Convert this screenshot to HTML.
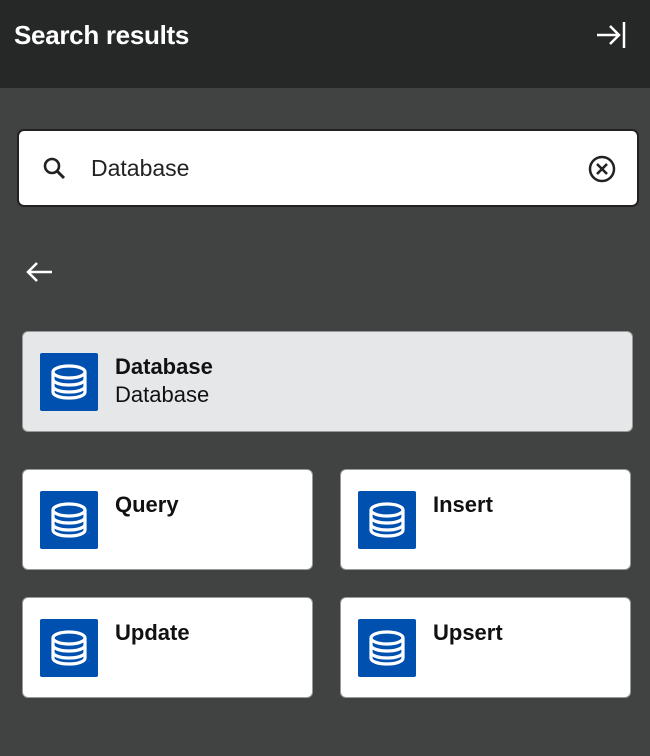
<!DOCTYPE html>
<html><head><style>
*{margin:0;padding:0;box-sizing:border-box}
body{width:650px;height:756px;background:#414242;font-family:"Liberation Sans",sans-serif;position:relative;overflow:hidden}
.hdr{position:absolute;left:0;top:0;width:650px;height:88px;background:#262727}
.hdr h1{position:absolute;left:14px;top:20px;font-size:26px;font-weight:bold;color:#fff;letter-spacing:-0.3px}
.search{position:absolute;left:17px;top:129px;width:622px;height:78px;background:#fff;border:2px solid #222;border-radius:7px}
.search span{position:absolute;left:72px;top:24px;font-size:23px;color:#222}
.card{position:absolute;background:#fff;border-radius:6px;border:1px solid #999}
.icon{position:absolute;left:17px;top:21px;width:58px;height:58px;background:#0050b0;border-radius:2px}
.t{position:absolute;left:92px;top:22px;font-size:22px;font-weight:bold;color:#111}
.s{position:absolute;left:92px;top:50px;font-size:22px;color:#111}
</style></head><body>
<div class="hdr"><h1>Search results</h1>
<svg style="position:absolute;left:595px;top:20px" width="32" height="30" viewBox="0 0 32 30"><path d="M2 15H24M15 6l9 9-9 9" stroke="#fff" stroke-width="2.5" fill="none"/><path d="M29 2V28" stroke="#fff" stroke-width="2.5"/></svg>
</div>
<div class="search">
<svg style="position:absolute;left:22px;top:24px" width="28" height="28" viewBox="0 0 28 28"><circle cx="11" cy="11" r="7" stroke="#222" stroke-width="2.6" fill="none"/><path d="M16 16l7 7" stroke="#222" stroke-width="3"/></svg>
<span>Database</span>
<svg style="position:absolute;left:568px;top:23px" width="30" height="30" viewBox="0 0 30 30"><circle cx="15" cy="15" r="12" stroke="#222" stroke-width="2.5" fill="none"/><path d="M10 10l10 10M20 10l-10 10" stroke="#222" stroke-width="2.6"/></svg>
</div>
<svg style="position:absolute;left:24px;top:260px" width="30" height="24" viewBox="0 0 30 24"><path d="M28 12H4M13 3l-9 9 9 9" stroke="#fff" stroke-width="2.5" fill="none"/></svg>

<div class="card" style="left:22px;top:331px;width:611px;height:101px;background:#e6e7e9"><div class="icon"><svg width="58" height="58" viewBox="0 0 58 58"><g stroke="#fff" stroke-width="3.2" fill="none"><ellipse cx="29" cy="19" rx="16" ry="6"/><path d="M13 19v20c0 3.5 7 6 16 6s16-2.5 16-6V19"/><path d="M13 26c0 3.5 7 6 16 6s16-2.5 16-6M13 33c0 3.5 7 6 16 6s16-2.5 16-6"/></g></svg></div><div class="t">Database</div><div class="s" style="font-weight:normal">Database</div></div>

<div class="card" style="left:22px;top:469px;width:291px;height:101px"><div class="icon"><svg width="58" height="58" viewBox="0 0 58 58"><g stroke="#fff" stroke-width="3.2" fill="none"><ellipse cx="29" cy="19" rx="16" ry="6"/><path d="M13 19v20c0 3.5 7 6 16 6s16-2.5 16-6V19"/><path d="M13 26c0 3.5 7 6 16 6s16-2.5 16-6M13 33c0 3.5 7 6 16 6s16-2.5 16-6"/></g></svg></div><div class="t">Query</div></div>
<div class="card" style="left:340px;top:469px;width:291px;height:101px"><div class="icon"><svg width="58" height="58" viewBox="0 0 58 58"><g stroke="#fff" stroke-width="3.2" fill="none"><ellipse cx="29" cy="19" rx="16" ry="6"/><path d="M13 19v20c0 3.5 7 6 16 6s16-2.5 16-6V19"/><path d="M13 26c0 3.5 7 6 16 6s16-2.5 16-6M13 33c0 3.5 7 6 16 6s16-2.5 16-6"/></g></svg></div><div class="t">Insert</div></div>
<div class="card" style="left:22px;top:597px;width:291px;height:101px"><div class="icon"><svg width="58" height="58" viewBox="0 0 58 58"><g stroke="#fff" stroke-width="3.2" fill="none"><ellipse cx="29" cy="19" rx="16" ry="6"/><path d="M13 19v20c0 3.5 7 6 16 6s16-2.5 16-6V19"/><path d="M13 26c0 3.5 7 6 16 6s16-2.5 16-6M13 33c0 3.5 7 6 16 6s16-2.5 16-6"/></g></svg></div><div class="t">Update</div></div>
<div class="card" style="left:340px;top:597px;width:291px;height:101px"><div class="icon"><svg width="58" height="58" viewBox="0 0 58 58"><g stroke="#fff" stroke-width="3.2" fill="none"><ellipse cx="29" cy="19" rx="16" ry="6"/><path d="M13 19v20c0 3.5 7 6 16 6s16-2.5 16-6V19"/><path d="M13 26c0 3.5 7 6 16 6s16-2.5 16-6M13 33c0 3.5 7 6 16 6s16-2.5 16-6"/></g></svg></div><div class="t">Upsert</div></div>
</body></html>
